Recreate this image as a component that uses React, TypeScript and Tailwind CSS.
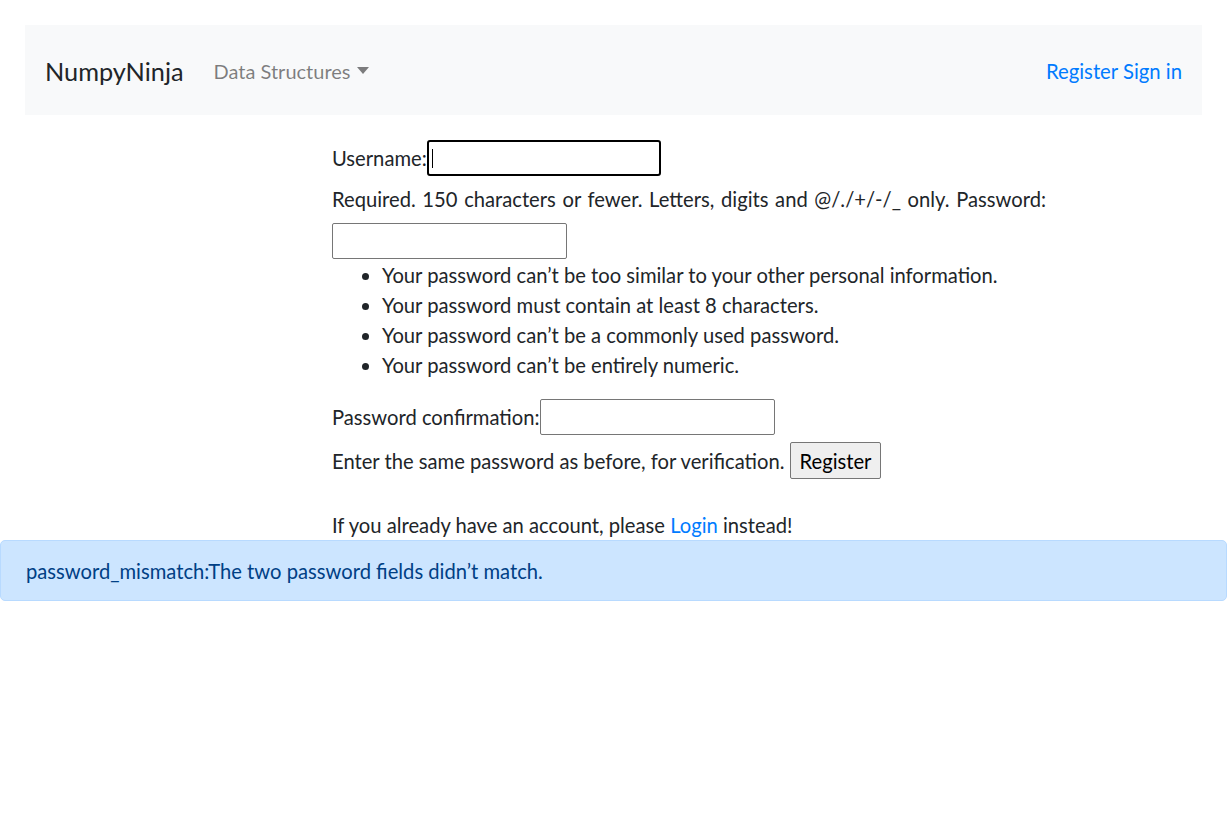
import React from "react";

const font = "font-['Lato','Noto_Sans',sans-serif]";

function Navbar() {
  return (
    <div className="mx-[25px] mt-[25px] h-[90px] bg-[#f8f9fa] flex items-center px-[20px] pt-[1px]">
      <span className="text-[25.3px] text-[#212529] mr-[30px]">NumpyNinja</span>
      <span className="flex items-center text-[20px] text-black/50">
        Data Structures
        <svg width="12" height="7" viewBox="0 0 12 7" className="ml-[6px]">
          <path d="M0 0h12L6 7z" fill="rgba(0,0,0,0.5)" />
        </svg>
      </span>
      <span className="ml-auto text-[20.3px] text-[#007bff]">Register Sign in</span>
    </div>
  );
}

function Box({ w, focused }: { w: string; focused?: boolean }) {
  return focused ? (
    <div className={`${w} h-[36px] border-2 border-black rounded-[3px] bg-white flex items-center pl-[3px]`}>
      <div className="w-px h-[19px] bg-black" />
    </div>
  ) : (
    <div className={`${w} h-[36px] border border-[#767676] rounded-[2px] bg-white`} />
  );
}

export default function App() {
  const rules = [
    "Your password can\u2019t be too similar to your other personal information.",
    "Your password must contain at least 8 characters.",
    "Your password can\u2019t be a commonly used password.",
    "Your password can\u2019t be entirely numeric.",
  ];
  return (
    <div className={`${font} min-h-[833px] bg-white text-[#212529] text-[20.2px] leading-[30px]`}>
      <Navbar />
      <div className="ml-[332px] w-[714px] mt-[25px]">
        <div className="flex items-center h-[36px]">
          <span>Username:</span>
          <Box w="w-[234px]" focused />
        </div>
        <p className="mt-[8px] text-justify [text-align-last:justify]">
          Required. 150 characters or fewer. Letters, digits and @/./+/-/_ only. Password:
        </p>
        <div className="mt-[9px]">
          <Box w="w-[235px]" />
        </div>
        <ul className="list-disc pl-[50px] mt-[1px]">
          {rules.map((r) => (
            <li key={r}>{r}</li>
          ))}
        </ul>
        <div className="flex items-center h-[36px] mt-[19px]">
          <span>Password confirmation:</span>
          <Box w="w-[235px]" />
        </div>
        <div className="flex items-center mt-[7px] h-[37px]">
          <span>Enter the same password as before, for verification.</span>
          <button className="ml-[5px] h-[37px] px-[9px] bg-[#efefef] border border-[#767676] rounded-[2px] text-black">
            Register
          </button>
        </div>
        <p className="mt-[31px]">
          If you already have an account, please{" "}
          <span className="text-[#007bff]">Login</span> instead!
        </p>
      </div>
      <div className="h-[61px] bg-[#cce5ff] border border-[#b8daff] rounded-[5px] text-[#004085] flex items-center px-[25px]">
        password_mismatch:The two password fields didn{"\u2019"}t match.
      </div>
    </div>
  );
}
